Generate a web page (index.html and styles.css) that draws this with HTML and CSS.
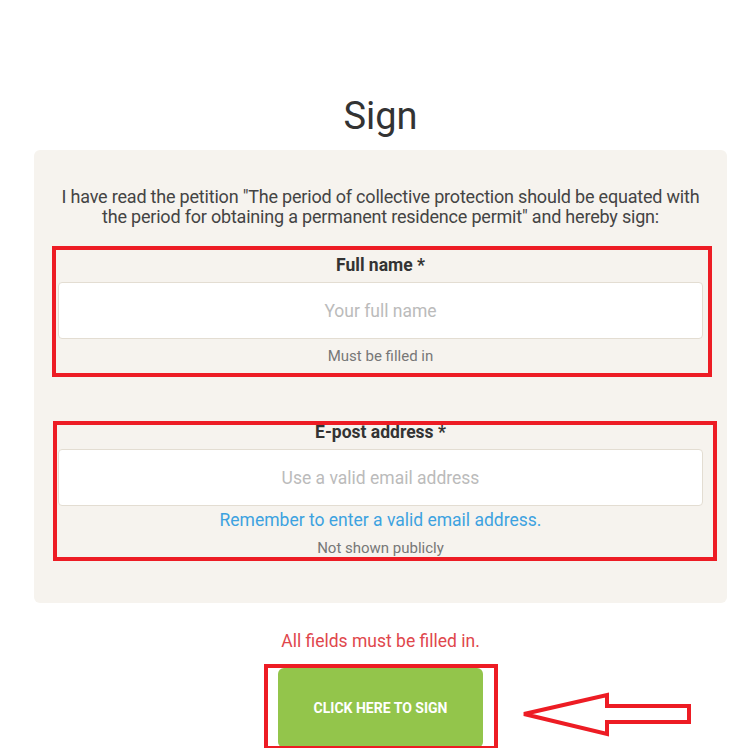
FILE: index.html
```html
<!DOCTYPE html>
<html lang="en">
<head>
    <meta charset="UTF-8">
    <meta name="viewport" content="width=device-width, initial-scale=1.0">
    <title>Sign the petition</title>
    <link rel="stylesheet" href="styles.css">
</head>
<body>
    <div class="container">
        <h1>Sign</h1>
        <div class="panel">
            <p class="intro">I have read the petition "The period of collective protection should be equated with the period for obtaining a permanent residence permit" and hereby sign:</p>

            <div class="form-group group-name">
                <label for="full_name">Full name *</label>
                <input type="text" id="full_name" placeholder="Your full name">
                <div class="hint">Must be filled in</div>
            </div>

            <div class="form-group group-email">
                <label for="email">E-post address *</label>
                <input type="email" id="email" placeholder="Use a valid email address">
                <div class="notice">Remember to enter a valid email address.</div>
                <div class="hint">Not shown publicly</div>
            </div>
        </div>

        <div class="error">All fields must be filled in.</div>

        <div class="submit-row">
            <div class="submit-wrap">
                <button class="sign-button">CLICK HERE TO SIGN</button>
                <svg class="arrow" width="185" height="60" viewBox="0 0 185 60">
                    <polygon points="9,29 92,10 92,21 174,21 174,37 92,37 92,49" fill="none" stroke="#ed1c24" stroke-width="4" stroke-linejoin="miter"/>
                </svg>
            </div>
        </div>
    </div>
</body>
</html>
```

FILE: styles.css
```css
body {
    font-family: 'Roboto', 'Liberation Sans', sans-serif;
    background-color: #fff;
    margin: 0;
}
.container {
    width: 693px;
    margin-left: 34px;
}
h1 {
    font-size: 38px;
    font-weight: 400;
    line-height: 44px;
    color: #333;
    text-align: center;
    margin: 94px 0 12px;
}
.panel {
    background-color: #f6f3ee;
    border-radius: 6px;
    padding: 37px 24px 45px;
}
.intro {
    font-size: 18px;
    line-height: 20px;
    letter-spacing: -0.2px;
    color: #444;
    text-align: center;
    margin: 0 0 27px;
}
.form-group {
    position: relative;
    text-align: center;
}
.form-group::before {
    content: '';
    position: absolute;
    border: 4px solid #ed1c24;
    pointer-events: none;
}
.group-name::before {
    top: -8px;
    left: -6px;
    right: -9px;
    bottom: -11px;
}
.group-email {
    margin-top: 55px;
}
.group-email::before {
    top: 0;
    left: -5px;
    right: -14px;
    bottom: -3px;
}
.form-group label {
    display: block;
    font-size: 17.5px;
    font-weight: 700;
    line-height: 22px;
    color: #333;
    margin-bottom: 6px;
}
.form-group input {
    display: block;
    box-sizing: border-box;
    width: 100%;
    height: 57px;
    margin: 0;
    padding: 0 12px;
    background: #fff;
    border: 1px solid #e3ddd2;
    border-radius: 4px;
    font-family: inherit;
    font-size: 17.5px;
    text-align: center;
    color: #333;
}
.form-group input::placeholder {
    color: #bbb;
}
.hint {
    font-size: 15px;
    line-height: 20px;
    color: #777;
    margin-top: 7px;
}
.notice {
    font-size: 17.5px;
    line-height: 22px;
    color: #3da2e0;
    margin-top: 3px;
}
.error {
    font-size: 17.5px;
    line-height: 22px;
    color: #e0474c;
    text-align: center;
    margin-top: 27px;
}
.submit-row {
    text-align: center;
    margin-top: 16px;
}
.submit-wrap {
    position: relative;
    display: inline-block;
    vertical-align: top;
}
.submit-wrap::before {
    content: '';
    position: absolute;
    top: -4px;
    left: -14px;
    right: -15px;
    bottom: -2px;
    border: 4px solid #ed1c24;
    pointer-events: none;
}
.sign-button {
    display: block;
    width: 205px;
    height: 80px;
    border: none;
    border-radius: 6px;
    background-color: #93c54b;
    color: #fff;
    font-family: inherit;
    font-size: 14px;
    font-weight: 700;
    cursor: pointer;
}
.arrow {
    position: absolute;
    left: calc(100% + 32px);
    top: 17px;
}
```
